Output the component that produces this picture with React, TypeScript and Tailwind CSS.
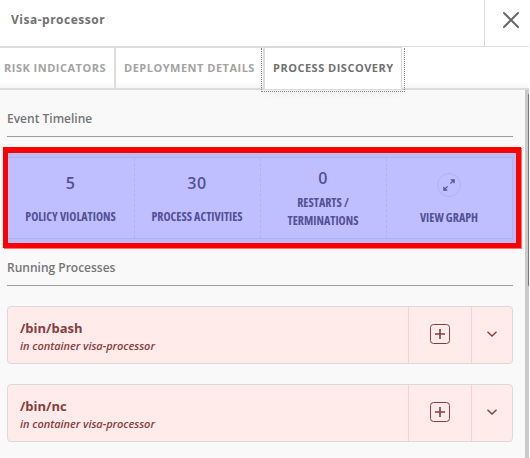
import React from "react";

const condensed =
  "font-bold text-[12px] leading-[18px] [font-stretch:75%] [font-variation-settings:'wdth'_75] whitespace-nowrap";

function SectionTitle({ children }: { children: React.ReactNode }) {
  return (
    <h2 className="ml-[7px] h-[29px] w-[506px] border-b border-[#a09f9f] text-[12px] font-semibold leading-[22px] text-[#757575]">
      {children}
    </h2>
  );
}

function Stat({ value, lines, first }: { value: string; lines: string[]; first?: boolean }) {
  return (
    <div className={`flex ${first ? "w-[127px]" : "w-[126px]"} flex-col items-center justify-center border-r border-dashed border-[#a8b4fb] pr-px`}>
      <div className={`text-[16px] font-semibold leading-[24px] tracking-[0.5px] ${lines.length > 1 ? "mb-[4px]" : "mb-[13px]"}`}>{value}</div>
      {lines.map((l) => (
        <div key={l} className={condensed}>{l}</div>
      ))}
    </div>
  );
}

function ProcessRow({ name }: { name: string }) {
  return (
    <div className="mb-[20px] ml-[7px] flex h-[58px] w-[506px] rounded-[4px] border border-[#d9dbdb] bg-[#ffebe9] text-[#843f3f]">
      <div className="flex-1 pl-[12px] pt-[12px]">
        <div className="text-[13px] font-bold leading-[18px]">{name}</div>
        <div className="text-[11px] font-semibold italic leading-[18px] tracking-[-0.03px]">in container visa-processor</div>
      </div>
      <div className="flex w-[63px] items-center justify-center border-l border-[#f9d0ce] pb-[2px]">
        <svg width="20" height="20" viewBox="0 0 20 20" fill="none" stroke="currentColor">
          <rect x="0.5" y="0.5" width="19" height="19" rx="3" />
          <path d="M10 5v10M5 10h10" strokeWidth="1.6" />
        </svg>
      </div>
      <div className="flex w-[41px] items-center justify-center border-l border-[#f9d0ce] pb-[2px]">
        <svg width="10" height="6" viewBox="0 0 10 6" fill="none" stroke="currentColor" strokeWidth="1.4">
          <path d="M0.5 0.7L5 5L9.5 0.7" />
        </svg>
      </div>
    </div>
  );
}

export default function App() {
  return (
    <div className="flex h-[458px] w-[529px] flex-col overflow-hidden bg-white font-['Open_Sans',sans-serif]">
      <header className="flex h-[47px] shrink-0 border-b border-[#dcdcdc]">
        <h1 className="flex-1 pl-[11px] pt-[10px] text-[12px] font-bold leading-[20px] tracking-[0.5px] text-[#707070]">Visa-processor</h1>
        <div className="flex w-[45px] border-l border-[#dcdcdc] pl-[18px] pt-[12px]">
          <svg width="16" height="16" viewBox="0 0 16 16" stroke="#68696b" strokeWidth="2" strokeLinecap="round">
            <path d="M1 1L15 15M15 1L1 15" />
          </svg>
        </div>
      </header>
      <nav className="flex h-[43px] shrink-0 border-b-2 border-[#dcdcdc] bg-linear-to-b from-white from-85% to-[#f6f6f6] text-[11px] font-bold leading-[40px] tracking-[0.5px] text-[#a3a3a3]">
        <div className="w-[116px] whitespace-nowrap border-r-2 border-t border-[#dcdcdc] pl-[4px]">RISK INDICATORS</div>
        <div className="w-[147px] whitespace-nowrap border-t border-[#dcdcdc] pl-[8px]">DEPLOYMENT DETAILS</div>
        <div className="relative z-10 h-[43px] w-[139px] whitespace-nowrap border-b border-l-2 border-r border-t border-[#dcdcdc] bg-white pl-[8px] text-[#707070] shadow-[0_3px_8px_rgba(0,0,0,0.06)]">
          PROCESS DISCOVERY
          <div className="pointer-events-none absolute -bottom-[3px] -left-[4px] -right-[4px] top-0 border-x border-b border-dotted border-[#888]" />
        </div>
      </nav>
      <div className="flex min-h-0 flex-1">
        <main className="w-[525px] overflow-hidden bg-[#f9f9f9] pt-[18px]">
          <SectionTitle>Event Timeline</SectionTitle>
          <div className="mb-[9px] ml-[3px] mt-[10px] h-[101px] w-[518px] border-[5px] border-t-[6px] border-[#ff0000] bg-[#bbbbf8] pr-[3px] pt-[4px] shadow-[1px_1px_0_#ff7070]">
            <div className="flex h-[82px] w-[505px] border border-l-0 border-[#a5b4fb] bg-[#bfbfff] text-[#535096]">
              <Stat first value="5" lines={["POLICY VIOLATIONS"]} />
              <Stat value="30" lines={["PROCESS ACTIVITIES"]} />
              <Stat value="0" lines={["RESTARTS /", "TERMINATIONS"]} />
              <div className="flex flex-1 flex-col items-center pr-px pt-[15px]">
                <div className="mb-[12px] flex size-[24px] items-center justify-center rounded-full border border-[#a5b4fb]">
                  <svg width="12" height="12" viewBox="0 0 12 12" fill="none" stroke="currentColor" strokeWidth="1.2">
                    <path d="M7.4 4.6L11 1M7.7 .9H11.1V4.3M4.6 7.4L1 11M.9 7.7V11.1H4.3" />
                  </svg>
                </div>
                <div className={condensed}>VIEW GRAPH</div>
              </div>
            </div>
          </div>
          <SectionTitle>Running Processes</SectionTitle>
          <div className="h-[20px]" />
          <ProcessRow name="/bin/bash" />
          <ProcessRow name="/bin/nc" />
        </main>
        <div className="flex w-[4px] justify-end bg-[#cacaca] pt-[4px]">
          <div className="h-[192px] w-px bg-[#777]" />
        </div>
      </div>
    </div>
  );
}
